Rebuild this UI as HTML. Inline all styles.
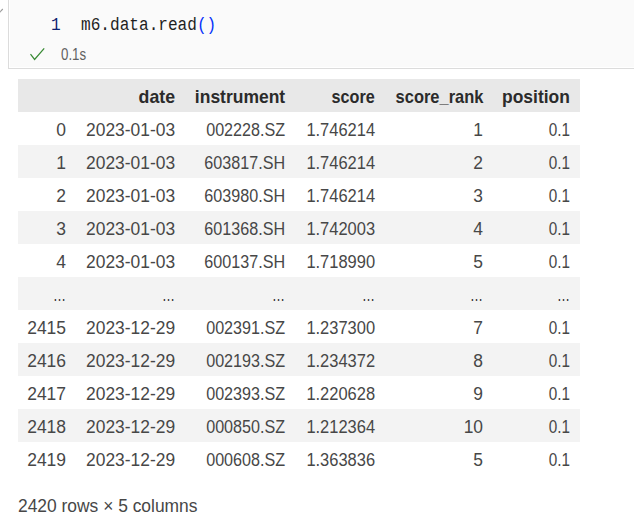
<!DOCTYPE html>
<html><head><meta charset="utf-8">
<style>
html,body{margin:0;padding:0;background:#fff;width:634px;height:519px;overflow:hidden;position:relative;font-family:"Liberation Sans",sans-serif;}
.cell{position:absolute;left:8px;top:-2px;width:630px;height:70px;background:#fff;border-left:1px solid #dcdcdc;border-bottom:1px solid #dcdcdc;}
.fill{position:absolute;left:10px;top:0;width:630px;height:67px;background:#fafafa;}
.ln{position:absolute;left:51px;top:15px;font:17.5px "Liberation Mono",monospace;color:#0b216f;line-height:20px;white-space:pre;transform:scaleX(0.92);transform-origin:0 0;}
.code{position:absolute;left:81px;top:15px;font:17.5px "Liberation Mono",monospace;color:#1f1f1f;line-height:20px;white-space:pre;transform:scaleX(0.92);transform-origin:0 0;}
.code .p{color:#0431fa;}
.chk{position:absolute;left:29px;top:47px;}
.time{position:absolute;left:61px;top:45px;font:16px "Liberation Sans",sans-serif;color:#616161;line-height:20px;white-space:pre;transform:scaleX(0.83);transform-origin:0 0;}
.chev{position:absolute;left:0;top:0;}
table{position:absolute;left:18px;top:79px;width:562px;border-collapse:collapse;border-spacing:0;table-layout:fixed;}
th,td{padding:0;text-align:right;white-space:nowrap;overflow:visible;}
td{font-size:18px;color:#474747;padding-top:3px;height:30px;line-height:30px;}
th{font-size:19px;font-weight:bold;color:#2b2b2b;padding-top:2px;height:31px;line-height:31px;}
thead tr{background:#e8e8e8;}
th span,td span{display:inline-block;transform-origin:100% 50%;margin-left:-300px;}
tbody tr:nth-child(even){background:#f3f3f3;}
td:nth-child(1){padding-right:10px;} td:nth-child(1) span{transform:scaleX(0.971);}
th:nth-child(1){padding-right:10px;} th:nth-child(1) span{transform:scaleX(1);}
td:nth-child(2){padding-right:10px;} td:nth-child(2) span{transform:scaleX(0.967);}
th:nth-child(2){padding-right:10px;} th:nth-child(2) span{transform:scaleX(0.934);}
td:nth-child(3){padding-right:10px;} td:nth-child(3) span{transform:scaleX(0.896);}
th:nth-child(3){padding-right:10px;} th:nth-child(3) span{transform:scaleX(0.92);}
td:nth-child(4){padding-right:10px;} td:nth-child(4) span{transform:scaleX(0.915);}
th:nth-child(4){padding-right:10px;} th:nth-child(4) span{transform:scaleX(0.852);}
td:nth-child(5){padding-right:10px;} td:nth-child(5) span{transform:scaleX(0.967);}
th:nth-child(5){padding-right:10px;} th:nth-child(5) span{transform:scaleX(0.866);}
td:nth-child(6){padding-right:10px;} td:nth-child(6) span{transform:scaleX(0.85);}
th:nth-child(6){padding-right:10px;} th:nth-child(6) span{transform:scaleX(0.918);}

.foot{position:absolute;left:18px;top:495px;font-size:18px;color:#474747;line-height:22px;white-space:pre;transform:scaleX(0.967);transform-origin:0 0;}
tr.el td span{transform:scaleX(0.72) !important;color:#2e2e2e;}
</style></head><body>
<svg class="chev" width="8" height="16" viewBox="0 0 8 16"><path d="M-1 13 L2.8 9" fill="none" stroke="#9a9a9a" stroke-width="1.1"/></svg>
<div class="cell"></div><div class="fill"></div>
<div class="ln">1</div>
<div class="code">m6.data.read<span class="p">()</span></div>
<svg class="chk" width="18" height="16" viewBox="0 0 18 16"><path d="M1.5 7.1 L5.6 12.4 L15.2 1.3" fill="none" stroke="#388a34" stroke-width="1.25"/></svg>
<div class="time">0.1s</div>
<table>
<colgroup><col style="width:58px"><col style="width:109px"><col style="width:110px"><col style="width:90px"><col style="width:108px"><col style="width:87px"></colgroup>
<thead><tr><th><span></span></th><th><span>date</span></th><th><span>instrument</span></th><th><span>score</span></th><th><span>score_rank</span></th><th><span>position</span></th></tr></thead>
<tbody>
<tr><td><span>0</span></td><td><span>2023-01-03</span></td><td><span>002228.SZ</span></td><td><span>1.746214</span></td><td><span>1</span></td><td><span>0.1</span></td></tr>
<tr><td><span>1</span></td><td><span>2023-01-03</span></td><td><span>603817.SH</span></td><td><span>1.746214</span></td><td><span>2</span></td><td><span>0.1</span></td></tr>
<tr><td><span>2</span></td><td><span>2023-01-03</span></td><td><span>603980.SH</span></td><td><span>1.746214</span></td><td><span>3</span></td><td><span>0.1</span></td></tr>
<tr><td><span>3</span></td><td><span>2023-01-03</span></td><td><span>601368.SH</span></td><td><span>1.742003</span></td><td><span>4</span></td><td><span>0.1</span></td></tr>
<tr><td><span>4</span></td><td><span>2023-01-03</span></td><td><span>600137.SH</span></td><td><span>1.718990</span></td><td><span>5</span></td><td><span>0.1</span></td></tr>
<tr class="el"><td><span>…</span></td><td><span>…</span></td><td><span>…</span></td><td><span>…</span></td><td><span>…</span></td><td><span>…</span></td></tr>
<tr><td><span>2415</span></td><td><span>2023-12-29</span></td><td><span>002391.SZ</span></td><td><span>1.237300</span></td><td><span>7</span></td><td><span>0.1</span></td></tr>
<tr><td><span>2416</span></td><td><span>2023-12-29</span></td><td><span>002193.SZ</span></td><td><span>1.234372</span></td><td><span>8</span></td><td><span>0.1</span></td></tr>
<tr><td><span>2417</span></td><td><span>2023-12-29</span></td><td><span>002393.SZ</span></td><td><span>1.220628</span></td><td><span>9</span></td><td><span>0.1</span></td></tr>
<tr><td><span>2418</span></td><td><span>2023-12-29</span></td><td><span>000850.SZ</span></td><td><span>1.212364</span></td><td><span>10</span></td><td><span>0.1</span></td></tr>
<tr><td><span>2419</span></td><td><span>2023-12-29</span></td><td><span>000608.SZ</span></td><td><span>1.363836</span></td><td><span>5</span></td><td><span>0.1</span></td></tr>
</tbody>
</table>
<div class="foot">2420 rows × 5 columns</div>
</body></html>
